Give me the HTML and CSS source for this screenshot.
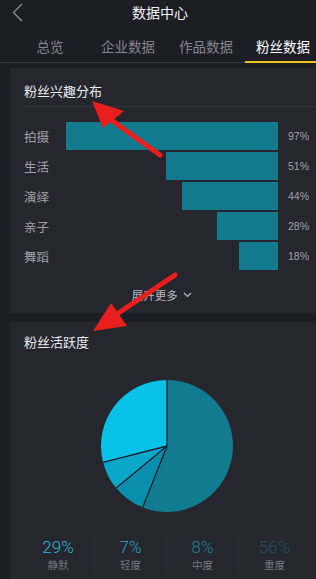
FILE: index.html
```html
<!DOCTYPE html>
<html lang="zh-CN">
<head>
<meta charset="utf-8">
<title>数据中心</title>
<link rel="stylesheet" href="styles.css">
</head>
<body>
<div class="page">
  <header class="topbar">
    <svg class="back" width="12" height="20" viewBox="0 0 12 20"><polyline points="10,1 1.5,9.5 10,18" fill="none" stroke="#8a8b92" stroke-width="1.4"/></svg>
    <div class="title">数据中心</div>
  </header>
  <nav class="tabs">
    <div class="tab">总览</div>
    <div class="tab">企业数据</div>
    <div class="tab">作品数据</div>
    <div class="tab active">粉丝数据</div>
  </nav>
  <main class="content">
    <section class="card interest">
      <h2 class="card-title">粉丝兴趣分布</h2>
      <div class="divider"></div>
      <div class="bars">
        <div class="label">拍摄</div><div class="track"><div class="bar" style="width:97%"></div></div><div class="pct">97%</div>
        <div class="label">生活</div><div class="track"><div class="bar" style="width:51%"></div></div><div class="pct">51%</div>
        <div class="label">演绎</div><div class="track"><div class="bar" style="width:44%"></div></div><div class="pct">44%</div>
        <div class="label">亲子</div><div class="track"><div class="bar" style="width:28%"></div></div><div class="pct">28%</div>
        <div class="label">舞蹈</div><div class="track"><div class="bar" style="width:18%"></div></div><div class="pct">18%</div>
      </div>
      <div class="more">展开更多 <svg width="9" height="6" viewBox="0 0 9 6"><polyline points="1,1 4.5,4.5 8,1" fill="none" stroke="#b8b9be" stroke-width="1.2"/></svg></div>
    </section>
    <section class="card activity">
      <h2 class="card-title">粉丝活跃度</h2>
      <div class="pie-wrap">
        <svg class="pie" width="134" height="134" viewBox="0 0 134 134">
          <path d="M67 67 L67 1 A66 66 0 1 1 42.7 128.37 Z" fill="#137b90"/>
          <path d="M67 67 L42.7 128.37 A66 66 0 0 1 16.15 109.07 Z" fill="#0b8fae"/>
          <path d="M67 67 L16.15 109.07 A66 66 0 0 1 3.07 83.41 Z" fill="#0aa7c9"/>
          <path d="M67 67 L3.07 83.41 A66 66 0 0 1 67 1 Z" fill="#08c3e7"/>
          <g stroke="#16202c" stroke-width="1.3">
            <line x1="67" y1="67" x2="67" y2="1"/>
            <line x1="67" y1="67" x2="42.7" y2="128.37"/>
            <line x1="67" y1="67" x2="16.15" y2="109.07"/>
            <line x1="67" y1="67" x2="3.07" y2="83.41"/>
          </g>
        </svg>
      </div>
      <div class="stats">
        <div class="stat"><div class="num n1">29%</div><div class="cap">静默</div></div>
        <div class="stat"><div class="num n2">7%</div><div class="cap">轻度</div></div>
        <div class="stat"><div class="num n3">8%</div><div class="cap">中度</div></div>
        <div class="stat"><div class="num n4">56%</div><div class="cap">重度</div></div>
      </div>
    </section>
  </main>
  <svg class="annot" width="316" height="579" viewBox="0 0 316 579">
    <line x1="160" y1="155" x2="110" y2="119" stroke="#e81f1c" stroke-width="5" stroke-linecap="round"/>
    <polygon points="92,101 103,128 124,111" fill="#e81f1c"/>
    <line x1="175" y1="275" x2="114" y2="316" stroke="#e81f1c" stroke-width="5" stroke-linecap="round"/>
    <polygon points="93,331 111,303 127,326" fill="#e81f1c"/>
  </svg>
</div>
</body>
</html>
```
FILE: styles.css
```css
* { box-sizing: border-box; }
html, body {
  margin: 0;
  padding: 0;
  background: #1c1d25;
  font-family: "Noto Sans CJK SC", "Noto Sans", sans-serif;
}
.page {
  position: relative;
  width: 316px;
  height: 579px;
  overflow: hidden;
  background: #1c1d25;
}
.topbar {
  height: 26px;
  display: flex;
  align-items: center;
  justify-content: center;
  position: relative;
}
.back {
  position: absolute;
  left: 12px;
  top: 3px;
}
.title {
  color: #f2f2f2;
  font-size: 14px;
  line-height: 20px;
  margin-left: 4px;
  margin-top: -3px;
}
.tabs {
  display: grid;
  grid-template-columns: 78px 78px 78px 71px;
  padding-left: 11px;
  height: 37px;
  border-bottom: 1px solid #34353d;
}
.tab {
  color: #85868c;
  font-size: 13.5px;
  line-height: 20px;
  text-align: center;
  padding-top: 10px;
}
.tab.active {
  color: #ffffff;
  border-bottom: 2px solid #f0c419;
  padding-left: 5px;
  margin-bottom: -1px;
}
.content {
  padding: 5px 0 0 10px;
  display: flex;
  flex-direction: column;
  gap: 9px;
}
.card {
  background: #25262e;
}
.interest {
  height: 245px;
  padding: 14px 0 0 14px;
}
.card-title {
  margin: 0;
  font-weight: normal;
  font-size: 13px;
  line-height: 18px;
  color: #ececee;
}
.divider {
  height: 1px;
  background: #34353d;
  margin-top: 6px;
}
.bars {
  margin-top: 15px;
  display: grid;
  grid-template-columns: 35px 219px auto;
  grid-auto-rows: 28px;
  row-gap: 2px;
  align-items: center;
}
.label {
  color: #a2a3a8;
  font-size: 12.5px;
}
.track {
  height: 28px;
  display: flex;
  justify-content: flex-end;
}
.bar {
  height: 100%;
  background: #147a8f;
}
.pct {
  padding-left: 10px;
  color: #a2a3a8;
  font-size: 10.5px;
  font-family: "Liberation Sans", Arial, sans-serif;
}
.more {
  margin-top: 17px;
  padding-right: 14px;
  text-align: center;
  color: #b8b9be;
  font-size: 11.5px;
  line-height: 16px;
  margin-left: -2px;
}
.more svg {
  margin-left: 3px;
  vertical-align: 2px;
}
.activity {
  height: 270px;
  padding: 11px 0 0 14px;
}
.pie-wrap {
  margin-top: 28px;
  padding-left: 76px;
  height: 134px;
}
.pie { display: block; }
.stats {
  margin-top: 24px;
  margin-left: -2px;
  display: grid;
  grid-template-columns: repeat(4, 72px);
}
.stat {
  text-align: center;
  border-left: 1px solid #2e2f38;
}
.stat:first-child { border-left: none; }
.num {
  font-family: "Roboto", "Liberation Sans", sans-serif;
  font-weight: 300;
  font-size: 17px;
  line-height: 20px;
}
.n1 { color: #2fbadc; }
.n2 { color: #2aa3c3; }
.n3 { color: #20849e; }
.n4 { color: #1d5563; }
.cap {
  color: #75767c;
  font-size: 10.5px;
  line-height: 16px;
}
.annot {
  position: absolute;
  left: 0;
  top: 0;
  pointer-events: none;
}
```
